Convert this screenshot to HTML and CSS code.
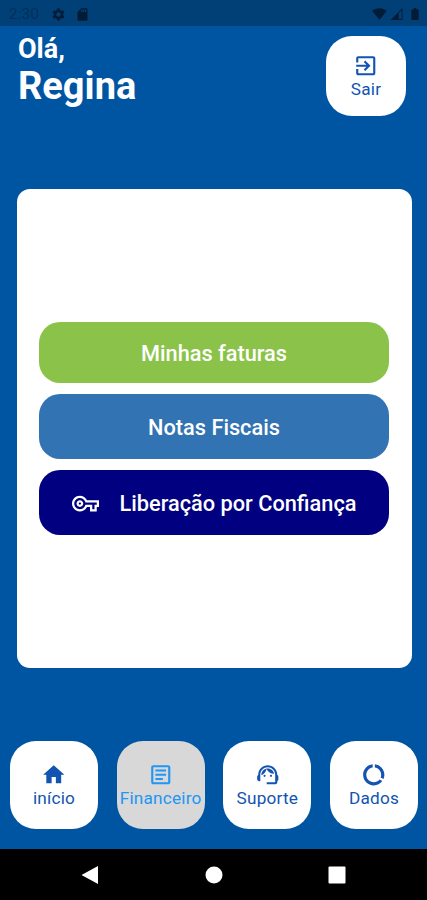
FILE: index.html
```html
<!DOCTYPE html>
<html lang="pt-BR">
<head>
    <meta charset="UTF-8">
    <meta name="viewport" content="width=device-width, initial-scale=1.0">
    <title>Financeiro</title>
    <link rel="stylesheet" href="styles.css">
</head>
<body>
    <div class="status-bar">
        <span class="clock">2:30</span>
        <svg class="status-gear" viewBox="0 0 24 24"><path d="M19.14 12.94c.04-.3.06-.61.06-.94 0-.32-.02-.64-.07-.94l2.03-1.58c.18-.14.23-.41.12-.61l-1.92-3.32c-.12-.22-.37-.29-.59-.22l-2.39.96c-.5-.38-1.03-.7-1.62-.94l-.36-2.54c-.04-.24-.24-.41-.48-.41h-3.84c-.24 0-.43.17-.47.41l-.36 2.54c-.59.24-1.13.57-1.62.94l-2.39-.96c-.22-.08-.47 0-.59.22L2.74 8.87c-.12.21-.08.47.12.61l2.03 1.58c-.05.3-.09.63-.09.94s.02.64.07.94l-2.03 1.58c-.18.14-.23.41-.12.61l1.92 3.32c.12.22.37.29.59.22l2.39-.96c.5.38 1.03.7 1.62.94l.36 2.54c.05.24.24.41.48.41h3.84c.24 0 .44-.17.47-.41l.36-2.54c.59-.24 1.13-.56 1.62-.94l2.39.96c.22.08.47 0 .59-.22l1.92-3.32c.12-.22.07-.47-.12-.61l-2.01-1.58zM12 15.6c-1.98 0-3.6-1.62-3.6-3.6s1.62-3.6 3.6-3.6 3.6 1.62 3.6 3.6-1.62 3.6-3.6 3.6z"/></svg>
        <svg class="status-sd" viewBox="0 0 24 24"><path d="M18 2h-8L4.02 8 4 20c0 1.1.9 2 2 2h12c1.1 0 2-.9 2-2V4c0-1.1-.9-2-2-2zm-6 6h-2V4h2v4zm3 0h-2V4h2v4zm3 0h-2V4h2v4z"/></svg>
        <div class="status-right">
            <svg class="status-wifi" viewBox="0 0 16 13"><path d="M0 3C4.5-.8 11.500-.8 16 3L8 13z"/></svg>
            <svg class="status-signal" viewBox="0 0 13 13"><path d="M0 13L13 0v13zM9 5.500v6.500h3V2.500z" fill-rule="evenodd"/></svg>
            <svg class="status-battery" viewBox="0 0 8 13"><path d="M2.500 0h3v1.500H8V13H0V1.500h2.500z"/></svg>
        </div>
    </div>

    <header class="header">
        <div class="greeting">
            <p class="hello">Olá,</p>
            <h1 class="name">Regina</h1>
        </div>
        <button class="tile logout">
            <svg class="icon" viewBox="0 0 24 24"><path d="M10.090 15.590L11.500 17l5-5-5-5-1.410 1.410L12.670 11H3v2h9.670l-2.580 2.590zM19 3H5c-1.110 0-2 .9-2 2v4h2V5h14v14H5v-4H3v4c0 1.100.89 2 2 2h14c1.100 0 2-.9 2-2V5c0-1.100-.9-2-2-2z"/></svg>
            <span>Sair</span>
        </button>
    </header>

    <main class="card">
        <button class="btn btn-green">Minhas faturas</button>
        <button class="btn btn-blue">Notas Fiscais</button>
        <button class="btn btn-navy">
            <svg class="key" viewBox="0 0 24 24"><path d="M22 19h-6v-4h-2.680c-1.140 2.420-3.600 4-6.320 4-3.860 0-7-3.140-7-7s3.140-7 7-7c2.720 0 5.170 1.580 6.320 4H24v6h-2v4zm-4-2h2v-4h2v-2H11.940l-.23-.67C11.010 8.340 9.110 7 7 7c-2.760 0-5 2.240-5 5s2.240 5 5 5c2.110 0 4.010-1.340 4.710-3.330l.23-.67H18v4zM7 15c-1.650 0-3-1.350-3-3s1.350-3 3-3 3 1.350 3 3-1.350 3-3 3zm0-4c-.55 0-1 .45-1 1s.45 1 1 1 1-.45 1-1-.45-1-1-1z"/></svg>
            <span>Liberação por Confiança</span>
        </button>
    </main>

    <nav class="tabs">
        <button class="tile">
            <svg class="icon" viewBox="0 0 24 24"><path d="M10 20v-6h4v6h5v-8h3L12 3 2 12h3v8z"/></svg>
            <span>início</span>
        </button>
        <button class="tile active">
            <svg class="icon" viewBox="0 0 24 24"><path d="M19 5v14H5V5h14m0-2H5c-1.100 0-2 .9-2 2v14c0 1.100.9 2 2 2h14c1.100 0 2-.9 2-2V5c0-1.100-.9-2-2-2zM14 17H7v-2h7v2zm3-4H7v-2h10v2zm0-4H7V7h10v2z"/></svg>
            <span>Financeiro</span>
        </button>
        <button class="tile">
            <svg class="icon" viewBox="0 0 24 24"><path d="M21 12.220C21 6.730 16.740 3 12 3c-4.690 0-9 3.650-9 9.280-.6.34-1 .98-1 1.720v2c0 1.100.9 2 2 2h1v-6.100c0-3.870 3.130-7 7-7s7 3.130 7 7V19h-8v2h8c1.100 0 2-.9 2-2v-1.220c.59-.31 1-.92 1-1.640v-2.300c0-.7-.41-1.310-1-1.620z"/><circle cx="9" cy="13" r="1"/><circle cx="15" cy="13" r="1"/><path d="M18 11.030C17.520 8.180 15.040 6 12.050 6c-3.030 0-6.290 2.510-6.030 6.450 2.470-1.010 4.330-3.210 4.860-5.890 1.310 2.630 4 4.440 7.120 4.470z"/></svg>
            <span>Suporte</span>
        </button>
        <button class="tile">
            <svg class="icon" viewBox="0 0 24 24"><path d="M13 2.050v3.030c3.390.49 6 3.390 6 6.920 0 .9-.18 1.750-.48 2.540l2.600 1.530c.56-1.240.88-2.620.88-4.070 0-5.180-3.950-9.450-9-9.950zM12 19c-3.870 0-7-3.130-7-7 0-3.530 2.610-6.430 6-6.920V2.050c-5.060.5-9 4.760-9 9.950 0 5.520 4.470 10 9.990 10 3.310 0 6.240-1.610 8.060-4.090l-2.600-1.530C16.170 17.980 14.210 19 12 19z"/></svg>
            <span>Dados</span>
        </button>
    </nav>

    <footer class="system-nav">
        <svg viewBox="0 0 18 20"><path d="M17 1v18L.5 10z"/></svg>
        <svg viewBox="0 0 18 20"><circle cx="9" cy="10" r="8.500"/></svg>
        <svg viewBox="0 0 18 20"><rect x="0.500" y="1.500" width="17" height="17" rx="1"/></svg>
    </footer>
</body>
</html>
```

FILE: styles.css
```css
* {
    margin: 0;
    padding: 0;
    box-sizing: border-box;
    font-family: Roboto, 'Liberation Sans', sans-serif;
}

body {
    display: flex;
    flex-direction: column;
    height: 900px;
    background-color: #0055a3;
    overflow: hidden;
}

button {
    border: none;
    cursor: pointer;
}

svg {
    display: block;
    fill: currentColor;
    flex-shrink: 0;
}

/* status bar */
.status-bar {
    display: flex;
    align-items: center;
    height: 26px;
    padding: 2px 8px 0 9px;
    background-color: #004077;
    color: #021c38;
}

.clock {
    width: 42px;
    font-size: 15.5px;
    color: #022f5c;
}

.status-gear {
    width: 15px;
    height: 15px;
}

.status-sd {
    width: 15px;
    height: 15px;
    margin-left: 9px;
}

.status-right {
    display: flex;
    margin-left: auto;
}

.status-wifi {
    width: 15px;
    height: 12px;
}

.status-signal {
    width: 13px;
    height: 12px;
    margin-left: 3px;
}

.status-battery {
    width: 8px;
    height: 12px;
    margin-left: 8px;
}

/* header */
.header {
    display: flex;
    justify-content: space-between;
    height: 163px;
    padding: 10px 21px 0 18px;
    color: #fff;
}

.hello {
    margin-top: -3px;
    font-size: 27px;
    font-weight: bold;
    line-height: 32px;
}

.name {
    font-size: 38px;
    line-height: 42px;
}

.tile {
    display: flex;
    flex-direction: column;
    align-items: center;
    justify-content: center;
    width: 88px;
    height: 88px;
    border-radius: 26px;
    background-color: #fff;
    color: #1254b0;
    font-size: 17.2px;
    letter-spacing: 0.2px;
    line-height: 20px;
    white-space: nowrap;
}

.logout {
    width: 80px;
    height: 80px;
}

.icon {
    width: 25.5px;
    height: 25.5px;
}

/* main card */
.card {
    display: flex;
    flex-direction: column;
    justify-content: center;
    gap: 11px;
    height: 479px;
    margin: 0 15.5px 0 16.5px;
    padding: 0 22.5px;
    border-radius: 13px;
    background-color: #fff;
}

.btn {
    display: flex;
    align-items: center;
    justify-content: center;
    height: 65px;
    padding-top: 2px;
    border-radius: 21px;
    color: #fff;
    font-size: 21.75px;
    font-weight: 500;
}

.btn-green {
    height: 61px;
    background-color: #8bc34a;
}

.btn-blue {
    background-color: #3273b3;
}

.btn-navy {
    gap: 21px;
    background-color: #000080;
}

.key {
    width: 27px;
    height: 27px;
}

/* bottom tabs */
.tabs {
    display: flex;
    justify-content: space-between;
    margin-top: 73px;
    padding: 0 9px 0 10px;
}

.active {
    background-color: #d8d8d8;
    color: #2196f3;
}

.system-nav {
    display: flex;
    align-items: center;
    justify-content: space-between;
    height: 51px;
    margin-top: auto;
    padding: 0 81px;
    background-color: #000;
    color: #fff;
}

.system-nav svg {
    width: 18px;
    height: 20px;
}
```
